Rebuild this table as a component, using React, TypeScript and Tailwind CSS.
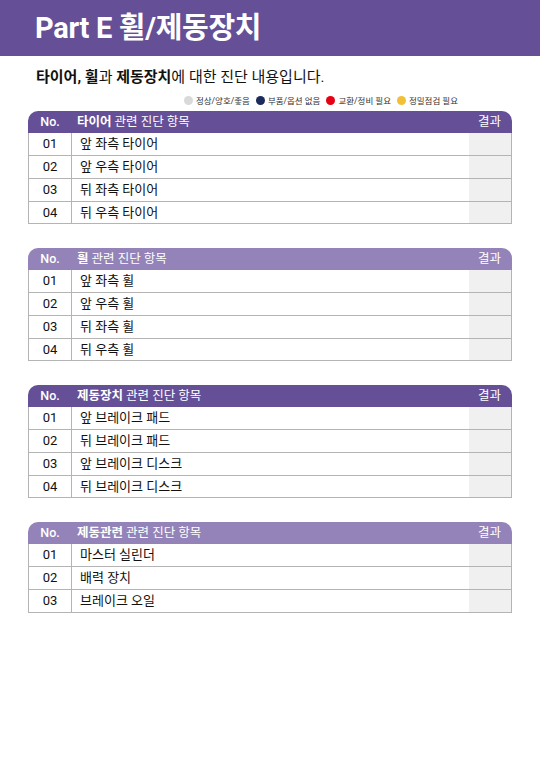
const font = { fontFamily: 'Roboto, "Noto Sans CJK KR", "Noto Sans", sans-serif' };

type Section = {
  key: string;
  light: boolean;
  items: string[];
};

const sections: Section[] = [
  { key: '타이어', light: false, items: ['앞 좌측 타이어', '앞 우측 타이어', '뒤 좌측 타이어', '뒤 우측 타이어'] },
  { key: '휠', light: true, items: ['앞 좌측 휠', '앞 우측 휠', '뒤 좌측 휠', '뒤 우측 휠'] },
  { key: '제동장치', light: false, items: ['앞 브레이크 패드', '뒤 브레이크 패드', '앞 브레이크 디스크', '뒤 브레이크 디스크'] },
  { key: '제동관련', light: true, items: ['마스터 실린더', '배력 장치', '브레이크 오일'] },
];

const legend = [
  { color: 'bg-[#d9d9d9]', label: '정상/양호/좋음' },
  { color: 'bg-[#1c2a5c]', label: '부품/옵션 없음' },
  { color: 'bg-[#e60012]', label: '교환/정비 필요' },
  { color: 'bg-[#f2c037]', label: '정밀점검 필요' },
];

function CheckTable({ section }: { section: Section }) {
  return (
    <div className="w-full">
      <div
        className={`flex h-[22px] items-center rounded-t-[10px] text-[12.5px] text-white ${
          section.light ? 'bg-[#9383b8]' : 'bg-[#654f97]'
        }`}
      >
        <div className="w-[44px] text-center font-medium">No.</div>
        <div className="flex-1 pl-[5px]">
          <span className="font-bold">{section.key}</span> 관련 진단 항목
        </div>
        <div className="w-[43px] pr-[2px] text-center">결과</div>
      </div>
      <div className="border-l border-r border-[#b4b4b4]">
        {section.items.map((item, i) => (
          <div key={item} className="flex h-[22.75px] items-stretch border-b border-[#b4b4b4] text-[13px] text-[#111]">
            <div className="flex w-[43px] items-center justify-center border-r border-[#b4b4b4]">
              {String(i + 1).padStart(2, '0')}
            </div>
            <div className="flex flex-1 items-center pl-[8px]">{item}</div>
            <div className="w-[42px] bg-[#f0f0f0]" />
          </div>
        ))}
      </div>
    </div>
  );
}

export default function App() {
  return (
    <div className="h-[780px] w-[540px] bg-white" style={font}>
      <div className="flex h-[56px] items-center bg-[#654f97] pl-[35px]">
        <h1 className="text-[29px] font-bold leading-none tracking-[-0.3px] text-white">Part E 휠/제동장치</h1>
      </div>

      <p className="mt-[10px] pl-[36px] text-[15px] text-[#111]">
        <span className="font-bold">타이어, 휠</span>과 <span className="font-bold">제동장치</span>에 대한 진단 내용입니다.
      </p>

      <div className="mt-[6px] flex items-center justify-end gap-[6px] pr-[82px] text-[8.5px] text-[#333]">
        {legend.map((l) => (
          <div key={l.label} className="flex items-center gap-[3px]">
            <span className={`inline-block h-[9px] w-[9px] rounded-full ${l.color}`} />
            <span>{l.label}</span>
          </div>
        ))}
      </div>

      <div className="mt-[4px] flex flex-col gap-[24px] px-[28px]">
        {sections.map((s) => (
          <CheckTable key={s.key} section={s} />
        ))}
      </div>
    </div>
  );
}
